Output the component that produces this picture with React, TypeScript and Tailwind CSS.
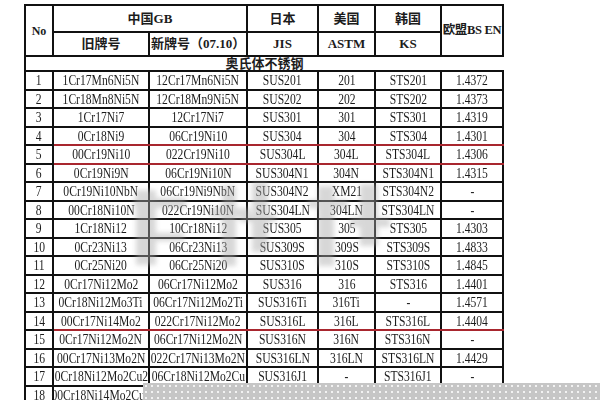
import React from "react";

const rows: string[][] = [
  ["1", "1Cr17Mn6Ni5N", "12Cr17Mn6Ni5N", "SUS201", "201", "STS201", "1.4372"],
  ["2", "1Cr18Mn8Ni5N", "12Cr18Mn9Ni5N", "SUS202", "202", "STS202", "1.4373"],
  ["3", "1Cr17Ni7", "12Cr17Ni7", "SUS301", "301", "STS301", "1.4319"],
  ["4", "0Cr18Ni9", "06Cr19Ni10", "SUS304", "304", "STS304", "1.4301"],
  ["5", "00Cr19Ni10", "022Cr19Ni10", "SUS304L", "304L", "STS304L", "1.4306"],
  ["6", "0Cr19Ni9N", "06Cr19Ni10N", "SUS304N1", "304N", "STS304N1", "1.4315"],
  ["7", "0Cr19Ni10NbN", "06Cr19Ni9NbN", "SUS304N2", "XM21", "STS304N2", "-"],
  ["8", "00Cr18Ni10N", "022Cr19Ni10N", "SUS304LN", "304LN", "STS304LN", "-"],
  ["9", "1Cr18Ni12", "10Cr18Ni12", "SUS305", "305", "STS305", "1.4303"],
  ["10", "0Cr23Ni13", "06Cr23Ni13", "SUS309S", "309S", "STS309S", "1.4833"],
  ["11", "0Cr25Ni20", "06Cr25Ni20", "SUS310S", "310S", "STS310S", "1.4845"],
  ["12", "0Cr17Ni12Mo2", "06Cr17Ni12Mo2", "SUS316", "316", "STS316", "1.4401"],
  ["13", "0Cr18Ni12Mo3Ti", "06Cr17Ni12Mo2Ti", "SUS316Ti", "316Ti", "-", "1.4571"],
  ["14", "00Cr17Ni14Mo2", "022Cr17Ni12Mo2", "SUS316L", "316L", "STS316L", "1.4404"],
  ["15", "0Cr17Ni12Mo2N", "06Cr17Ni12Mo2N", "SUS316N", "316N", "STS316N", "-"],
  ["16", "00Cr17Ni13Mo2N", "022Cr17Ni13Mo2N", "SUS316LN", "316LN", "STS316LN", "1.4429"],
  ["17", "0Cr18Ni12Mo2Cu2", "06Cr18Ni12Mo2Cu", "SUS316J1", "-", "STS316J1", "-"],
  ["18", "00Cr18Ni14Mo2Cu2", "022Cr18Ni14Mo2Cu", "SUS316J1L", "-", "STS316J1L", "-"],
];

const redBelow = new Set([3, 4, 13]);

export default function App() {
  return (
    <div className="relative w-[600px] h-[400px] overflow-hidden bg-white pl-[24px] pt-[4px] font-['Liberation_Serif','Noto_Sans_CJK_SC',serif] text-[#1c1c1c]">
      <table className="table-fixed border-collapse w-[478px]">
        <colgroup>
          <col className="w-[28px]" />
          <col className="w-[96px]" />
          <col className="w-[98px]" />
          <col className="w-[71px]" />
          <col className="w-[57px]" />
          <col className="w-[66px]" />
          <col className="w-[62px]" />
        </colgroup>
        <thead>
          <tr className="h-[27px]">
            <th rowSpan={2} className="border-2 border-[#111] text-[12px] font-bold p-0">No</th>
            <th colSpan={2} className="border-2 border-[#111] text-[13px] font-bold p-0">中国GB</th>
            <th className="border-2 border-[#111] text-[13px] font-bold p-0">日本</th>
            <th className="border-2 border-[#111] text-[13px] font-bold p-0">美国</th>
            <th className="border-2 border-[#111] text-[13px] font-bold p-0">韩国</th>
            <th rowSpan={2} className="border-2 border-[#111] text-[12.5px] font-bold p-0 whitespace-nowrap tracking-[-0.3px]">欧盟BS EN</th>
          </tr>
          <tr className="h-[24px]">
            <th className="border-2 border-[#111] text-[13px] font-bold p-0">旧牌号</th>
            <th className="border-2 border-[#111] text-[13px] font-bold p-0 whitespace-nowrap">新牌号（07.10）</th>
            <th className="border-2 border-[#111] text-[13px] font-bold p-0">JIS</th>
            <th className="border-2 border-[#111] text-[13px] font-bold p-0">ASTM</th>
            <th className="border-2 border-[#111] text-[13px] font-bold p-0">KS</th>
          </tr>
        </thead>
        <tbody>
          <tr className="h-[15px]">
            <td colSpan={7} className="border-2 border-r-0 border-[#111] text-center text-[13px] font-bold p-0 leading-none">奥氏体不锈钢</td>
          </tr>
          {rows.map((r, i) => (
            <tr key={i} className="h-[18.5px]">
              {r.map((c, j) => (
                <td
                  key={j}
                  className={
                    "border-2 border-[#111] text-[14.5px] leading-none p-0 whitespace-nowrap overflow-visible " +
                    (redBelow.has(i) && j > 0 ? "border-b-[#a8262e]" : "")
                  }
                >
                  <div className="flex justify-center">
                    <span className="shrink-0 inline-block scale-x-[0.8] origin-center">{c}</span>
                  </div>
                </td>
              ))}
            </tr>
          ))}
        </tbody>
      </table>

      {/* blurred watermark */}
      <svg className="absolute left-[130px] top-[178px] w-[270px] h-[95px] pointer-events-none" viewBox="0 0 270 95">
        <defs>
          <filter id="bl" x="-20%" y="-20%" width="140%" height="140%">
            <feGaussianBlur stdDeviation="2.5" />
          </filter>
        </defs>
        <g filter="url(#bl)" fill="#a8a8a8" opacity="0.45">
          <rect x="6" y="12" width="20" height="75" />
          <rect x="4" y="20" width="52" height="10" />
          <rect x="14" y="55" width="40" height="8" />
          <rect x="92" y="8" width="14" height="80" />
          <rect x="80" y="30" width="40" height="9" />
          <rect x="122" y="4" width="16" height="70" />
          <rect x="110" y="36" width="36" height="8" />
          <rect x="188" y="8" width="16" height="80" />
          <rect x="178" y="22" width="40" height="8" />
          <rect x="230" y="6" width="18" height="62" />
          <rect x="220" y="40" width="40" height="9" />
        </g>
      </svg>

      {/* dotted overlay at bottom */}
      <div className="absolute left-[143px] top-[383px] w-[457px] h-[17px] bg-[#c6c6c6] bg-[radial-gradient(circle,#f2f2f2_0.8px,transparent_1.3px)] bg-[length:6px_6px]" />
    </div>
  );
}
